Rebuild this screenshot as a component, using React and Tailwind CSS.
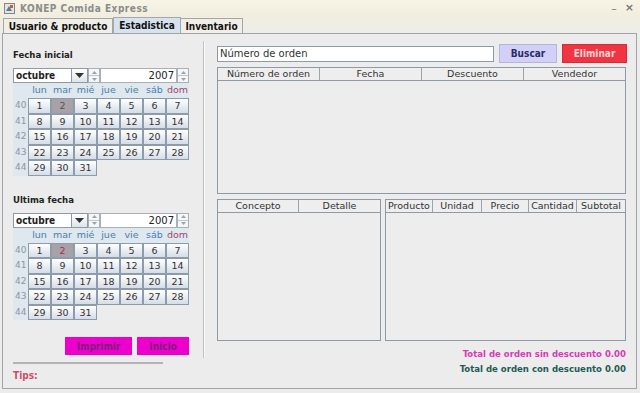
import React from 'react'

const DAYS = ['lun', 'mar', 'mié', 'jue', 'vie', 'sáb', 'dom']
const WEEKS = [
  [40, [1, 2, 3, 4, 5, 6, 7]],
  [41, [8, 9, 10, 11, 12, 13, 14]],
  [42, [15, 16, 17, 18, 19, 20, 21]],
  [43, [22, 23, 24, 25, 26, 27, 28]],
  [44, [29, 30, 31]],
]

// bold labels in the swing screen are narrower than plain DejaVu bold
const B = "font-bold font-[family-name:'DejaVu_Sans_Condensed',sans-serif] whitespace-nowrap"

function Spinner() {
  return (
    <div className="flex flex-col w-[12px] h-[15px] border border-[#a8b0b8] bg-[#f4f6f8]">
      <div className="flex-1 flex items-center justify-center border-b border-[#c0c6cc]">
        <svg width="5" height="3" viewBox="0 0 5 3"><path d="M0 3 L2.5 0 L5 3Z" fill="#9aa4ae" /></svg>
      </div>
      <div className="flex-1 flex items-center justify-center">
        <svg width="5" height="3" viewBox="0 0 5 3"><path d="M0 0 L2.5 3 L5 0Z" fill="#9aa4ae" /></svg>
      </div>
    </div>
  )
}

function Calendar({ label, selText }) {
  return (
    <div className="w-[176px]">
      <div className={`${B} text-[9.5px] leading-[12px] text-[#222]`}>{label}</div>
      <div className="flex h-[15px] mt-[7px]">
        <div className={`${B} w-[59px] border border-[#8e9aa6] bg-white text-[10px] leading-[13px] pl-[2px] text-[#222]`}>octubre</div>
        <div className="w-[16px] border-y border-r border-[#8e9aa6] bg-gradient-to-b from-white to-[#dfe4ea] flex items-center justify-center">
          <svg width="9" height="5" viewBox="0 0 9 5"><path d="M0 0 L9 0 L4.5 5Z" fill="#333" /></svg>
        </div>
        <Spinner />
        <div className="w-[77px] border border-[#a8b0b8] bg-white text-[10px] leading-[13px] text-right pr-[2px] text-[#222]">2007</div>
        <Spinner />
      </div>
      <div className="bg-[#dfe7ef] flex h-[15px] items-center pl-[15px]">
        {DAYS.map((d, i) => (
          <div key={d} className={`w-[23px] text-center text-[9.5px] ${i === 6 ? 'text-[#a04868]' : i === 5 ? 'text-[#4a7cb8]' : 'text-[#4a80a4]'}`}>{d}</div>
        ))}
      </div>
      {WEEKS.map(([wk, days]) => (
        <div key={wk} className="flex h-[15.5px]">
          <div className="w-[15px] bg-[#dfe7ef] text-[9px] text-[#8a96a2] leading-[15px] pl-[2px]">{wk}</div>
          {days.map(d => (
            <div
              key={d}
              className={`w-[23px] border border-[#8c9cac] text-center text-[9.5px] leading-[13px] ${
                d === 2
                  ? `bg-[#a8a2a8] ${selText}`
                  : 'bg-gradient-to-b from-white to-[#d6dde6] text-[#333]'
              }`}
            >
              {d}
            </div>
          ))}
          {days.length < 7 && <div className="flex-1" />}
        </div>
      ))}
    </div>
  )
}

function TableHead({ cols }) {
  return (
    <div className="flex h-[13px] border-b border-[#8e9aa6]">
      {cols.map(([name, w], i) => (
        <div
          key={name}
          style={{ width: w }}
          className={`text-center text-[9.5px] leading-[12px] text-[#333] bg-[#eeeeee] whitespace-nowrap ${i < cols.length - 1 ? 'border-r border-[#9aa4ae]' : ''}`}
        >
          {name}
        </div>
      ))}
    </div>
  )
}

export default function App() {
  return (
    <div className="w-[640px] h-[393px] bg-[#ececec] overflow-hidden font-['DejaVu_Sans',sans-serif]">
      {/* title bar */}
      <div className="h-[17px] flex items-center bg-gradient-to-b from-[#f8f4e6] to-[#f1edde] px-[4px]">
        <svg width="11" height="11" viewBox="0 0 11 11">
          <rect x="0.5" y="0.5" width="10" height="10" fill="#e8e4dc" stroke="#7a8a9a" />
          <path d="M2 8 L5 3 L8 8Z" fill="#5a7a9a" />
          <rect x="6" y="2" width="3" height="3" fill="#c06040" />
        </svg>
        <span className={`${B} ml-[5px] text-[10px] text-[#8c8c8c] tracking-[0.5px]`}>KONEP Comida Express</span>
        <div className="flex-1" />
        <span className="text-[11px] text-[#777] mr-[8px] leading-[10px]">–</span>
        <span className="text-[11px] text-[#777] mr-[2px] font-bold">×</span>
      </div>
      {/* tabs */}
      <div className="h-[16px] flex items-end pl-[3px] bg-gradient-to-b from-[#f1eee2] to-[#eceee8]">
        <div className={`${B} h-[15px] w-[110px] border border-b-0 border-[#a6a6a6] bg-[#f0eee6] text-[10px] text-[#111] flex items-center justify-center`}>Usuario &amp; producto</div>
        <div className={`${B} h-[16px] w-[68px] border border-b-0 border-[#a0a8b0] bg-[#d6e2ee] text-[10px] text-[#111] flex items-center justify-center`}>Estadistica</div>
        <div className={`${B} h-[15px] w-[62px] border border-b-0 border-l-0 border-[#a6a6a6] bg-[#f0eee6] text-[10px] text-[#111] flex items-center justify-center`}>Inventario</div>
      </div>
      {/* panel */}
      <div className="ml-[2px] w-[635px] h-[356px] border border-[#a0a4a8] flex">
        {/* left column */}
        <div className="pl-[10px] pt-[15px] w-[190px] flex flex-col">
          <Calendar label="Fecha inicial" selText="text-[#555]" />
          <div className="h-[18px]" />
          <Calendar label="Ultima fecha" selText="text-[#a03050]" />
          <div className="flex mt-[17px] ml-[52px] gap-[5px]">
            <div className={`${B} w-[67px] h-[18px] bg-[#ee00cc] text-[10px] text-[#7e1e80] flex items-center justify-center`}>Imprimir</div>
            <div className={`${B} w-[52px] h-[18px] bg-[#ee00cc] text-[10px] text-[#7e1e80] flex items-center justify-center`}>Inicio</div>
          </div>
          <div className="mt-[7px] w-[150px] h-[2px] bg-[#b4b4b4]" />
          <div className={`${B} mt-[4px] text-[10px] text-[#c8506a]`}>Tips:</div>
        </div>
        {/* separator */}
        <div className="ml-[10px] mt-[7px] w-[2px] h-[317px] bg-[#c2c2c2] border-r border-[#f8f8f8]" />
        {/* right column */}
        <div className="ml-[12px] pt-[10px] w-[410px] flex flex-col">
          <div className="flex items-center h-[19px]">
            <div className="w-[277px] h-[16px] border border-[#8e9aa6] bg-white text-[10px] leading-[14px] pl-[2px] text-[#333]">Número de orden</div>
            <div className={`${B} ml-[5px] w-[58px] h-[19px] bg-[#d2d0f6] border border-[#b4b4dc] text-[10px] text-[#2a2a6a] flex items-center justify-center`}>Buscar</div>
            <div className={`${B} ml-[5px] w-[65px] h-[19px] bg-[#f03442] border border-[#d82a38] text-[10px] text-[#f8d8d8] flex items-center justify-center`}>Eliminar</div>
          </div>
          <div className="mt-[4px] w-[409px] h-[127px] border border-[#8e9aa6] bg-[#ededed]">
            <TableHead cols={[['Número de orden', 102], ['Fecha', 102], ['Descuento', 102], ['Vendedor', 101]]} />
          </div>
          <div className="mt-[5px] flex">
            <div className="w-[164px] h-[142px] border border-[#8e9aa6] bg-[#ededed]">
              <TableHead cols={[['Concepto', 81], ['Detalle', 81]]} />
            </div>
            <div className="ml-[4px] w-[241px] h-[142px] border border-[#8e9aa6] bg-[#ededed]">
              <TableHead cols={[['Producto', 47], ['Unidad', 49], ['Precio', 47], ['Cantidad', 48], ['Subtotal', 48]]} />
            </div>
          </div>
          <div className={`${B} mt-[5px] text-right text-[9.5px] text-[#d83ab8] leading-[15px] pr-[1px]`}>Total de orden sin descuento 0.00</div>
          <div className={`${B} text-right text-[9.5px] text-[#1e5a54] leading-[15px] pr-[1px]`}>Total de orden con descuento 0.00</div>
        </div>
      </div>
    </div>
  )
}
